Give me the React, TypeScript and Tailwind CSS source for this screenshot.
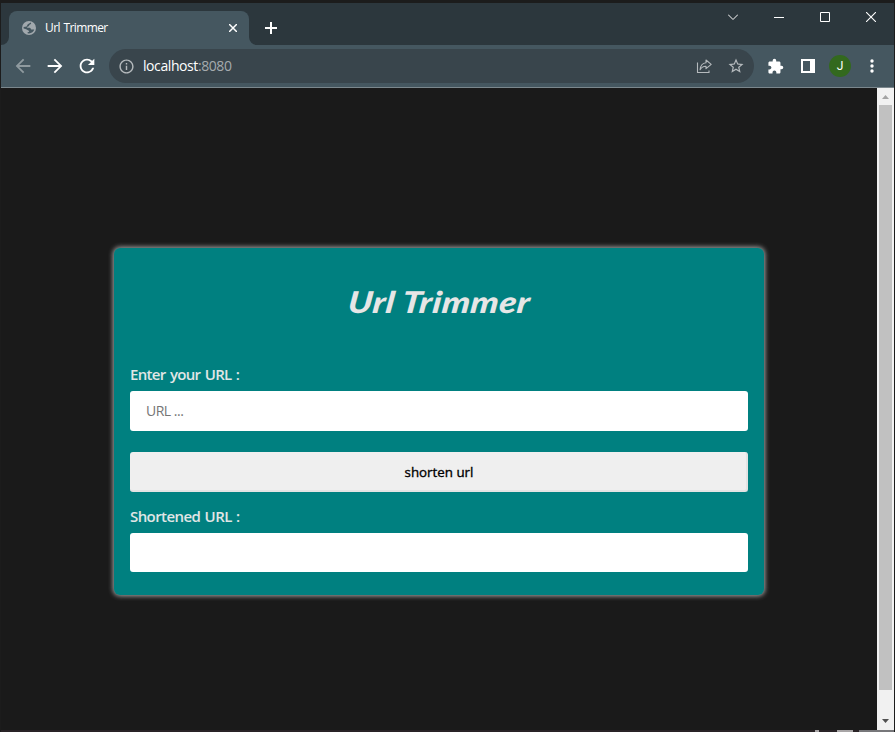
import { MdArrowBack, MdArrowForward, MdRefresh, MdInfoOutline, MdStarBorder, MdExtension } from "react-icons/md";

function Globe() {
  return (
    <svg className="ml-[13px] size-[14px] shrink-0" viewBox="0 0 14 14">
      <circle cx="7" cy="7" r="7" fill="#a1a8ad" />
      <path
        d="M8.8 1.6C9.6 2.6 9 3.4 7.6 3.8 7 4.4 7.2 5.2 6 5.6 5.2 5.8 5 6.2 5.2 6.8H7.6C8.8 7 8.6 8.2 9.4 8.6H12.3C11.6 10.8 9.6 12.5 7 12.5L5.6 12.3V11.2C7.4 11 7.6 10 6.4 9.4 5 9 4.8 8 1.6 7.4V6L4.6 5.4 5.6 3.4 7 2.6Z"
        fill="#455760"
      />
    </svg>
  );
}

function TabStrip() {
  return (
    <div className="flex h-[42px] bg-[#2c373d]">
      <div className="flex w-2 items-end">
        <svg width="8" height="8" viewBox="0 0 8 8">
          <path d="M8 0V8H0A8 8 0 0 0 8 0Z" fill="#455760" />
        </svg>
      </div>
      <div className="mt-2 flex h-[34px] w-[240px] items-center rounded-t-lg bg-[#455760]">
        <Globe />
        <span className="ml-[9px] flex-1 font-['Open_Sans','Noto_Sans',sans-serif] text-[12px] leading-4 tracking-[-0.6px] text-white [word-spacing:1px]">
          Url Trimmer
        </span>
        <svg className="mr-[12px] size-2" viewBox="0 0 8 8" stroke="#fff" strokeWidth="1.5">
          <path d="M0 0 8 8M8 0 0 8" />
        </svg>
      </div>
      <div className="flex w-2 items-end">
        <svg width="8" height="8" viewBox="0 0 8 8">
          <path d="M0 0V8H8A8 8 0 0 1 0 0Z" fill="#455760" />
        </svg>
      </div>
      <svg className="mt-[19px] ml-2 size-3" viewBox="0 0 12 12" stroke="#fff" strokeWidth="2">
        <path d="M6 0V12M0 6H12" />
      </svg>
      <div className="mt-2 mr-[18px] ml-auto flex h-[12px] items-center gap-9">
        <svg width="10" height="6" viewBox="0 0 10 6" fill="none" stroke="#fff">
          <path d="M0 .5 5 5.5 10 .5" />
        </svg>
        <svg width="10" height="2" viewBox="0 0 10 2" shapeRendering="crispEdges">
          <path d="M0 1H10V2H0Z" fill="#fff" />
        </svg>
        <svg width="10" height="10" viewBox="0 0 10 10" fill="none" stroke="#fff">
          <path d="M.5 .5H9.5V9.5H.5Z" />
        </svg>
        <svg width="10" height="10" viewBox="0 0 10 10" stroke="#fff" strokeWidth="1.1">
          <path d="M0 0 10 10M10 0 0 10" />
        </svg>
      </div>
    </div>
  );
}

function Toolbar() {
  return (
    <div className="flex h-[43px] items-center border-b border-[#7b878d] bg-[#455760]">
      <MdArrowBack className="ml-[11px] size-[22px] text-[#8f9a9f]" />
      <MdArrowForward className="ml-[10px] size-[22px] text-white" />
      <MdRefresh className="ml-[10px] size-[22px] text-white" />
      <div className="ml-[11px] flex h-[34px] w-[645px] items-center rounded-full bg-[#39454c]">
        <MdInfoOutline className="ml-[9px] size-[17px] text-[#b5babd]" />
        <span className="ml-2 flex-1 font-['Open_Sans','Noto_Sans',sans-serif] text-[14px] leading-5 tracking-[-0.42px] text-white">
          localhost<span className="text-[#a5abae]">:8080</span>
        </span>
        <svg width="16" height="16" viewBox="0 0 16 16" fill="none" stroke="#b5babd" strokeWidth="1.1">
          <path d="M1.5 4.5V14.5H13V12.5" />
          <path d="M10 2 15.2 6.3 10 10.7V8.2C7.3 8.1 5.5 9.2 4.1 11.7 4.5 7.5 6.6 5 10 4.7Z" strokeLinejoin="round" />
        </svg>
        <MdStarBorder className="mr-[9px] ml-[15px] size-[18px] text-[#b5babd]" />
      </div>
      <MdExtension className="ml-[13px] size-[17px] text-white" />
      <svg className="ml-[17px]" width="14" height="14" viewBox="0 0 14 14" shapeRendering="crispEdges">
        <path d="M0 0H14V14H0ZM2 2V12H9V2Z" fill="#fff" fillRule="evenodd" />
      </svg>
      <div className="ml-[14px] flex size-[22px] items-center justify-center rounded-full bg-[#33691e] font-['Roboto',sans-serif] text-[12px] leading-none text-white">
        J
      </div>
      <svg className="ml-[19px]" width="4" height="14" viewBox="0 0 4 14" fill="#fff">
        <circle cx="2" cy="2" r="1.7" />
        <circle cx="2" cy="7" r="1.7" />
        <circle cx="2" cy="12" r="1.7" />
      </svg>
    </div>
  );
}

function Card() {
  return (
    <div className="mt-[160px] h-[347px] w-[650px] rounded-md bg-[#008080] px-4 shadow-[0_0_5px_1px_#a8a8a8]">
      <h1 className="flex h-[116px] -skew-x-6 scale-x-[1.18] items-center justify-center pb-[10px] font-['Lato',cursive] text-[30px] leading-[40px] font-black tracking-[0.4px] text-[#e6e6e6] italic">
        Url Trimmer
      </h1>
      <label className="block h-[27px] text-[15px] leading-[20px] font-semibold tracking-[-0.66px] text-[#e0e6e6] [word-spacing:1px]">
        Enter your URL :
      </label>
      <input
        className="block h-10 w-full rounded-[3px] bg-white px-4 pb-[2px] text-[14px] tracking-[-0.5px] text-black outline-none placeholder:text-[#757575]"
        placeholder="URL ..."
      />
      <button className="mt-[21px] block h-10 w-full rounded-[3px] border-r-2 border-b-2 border-[#e3e3e3] bg-[#efefef] pt-[3px] pl-[2px] text-[13.333px] font-medium text-black [-webkit-text-stroke:0.35px_#000]">
        shorten url
      </button>
      <label className="mt-[14px] block h-[27px] text-[15px] leading-[20px] font-semibold tracking-[-0.58px] text-[#e0e6e6] [word-spacing:1px]">
        Shortened URL :
      </label>
      <input className="block h-[39px] w-full rounded-[3px] bg-white px-4 text-[14px] outline-none" />
    </div>
  );
}

function Scrollbar() {
  return (
    <div className="flex w-[17px] flex-col items-center bg-[#f1f1f1]">
      <svg width="17" height="17" viewBox="0 0 17 17">
        <path d="M5 11 8.5 7 12 11Z" fill="#a3a3a3" />
      </svg>
      <div className="h-[585px] w-[13px] bg-[#c1c1c1]" />
      <svg className="mt-[23px]" width="17" height="17" viewBox="0 0 17 17">
        <path d="M5 6 8.5 10 12 6Z" fill="#505050" />
      </svg>
    </div>
  );
}

export default function App() {
  return (
    <div className="flex h-[732px] w-[895px] flex-col overflow-hidden bg-[#1c1c1c] pt-[3px] pr-px pl-px">
      <TabStrip />
      <Toolbar />
      <div className="flex h-[642px] bg-[#1a1a1a] font-['Open_Sans','Noto_Sans',sans-serif]">
        <div className="flex flex-1 justify-center">
          <Card />
        </div>
        <Scrollbar />
      </div>
      <div className="flex h-[2px] justify-end bg-[#292326]">
        <div className="mr-[18px] h-[2px] w-1 bg-[#a8a5a6]" />
        <div className="mr-[6px] h-[2px] w-4 bg-[#a8a5a6]" />
        <div className="h-[2px] w-[35px] bg-[#77777a]" />
      </div>
    </div>
  );
}
